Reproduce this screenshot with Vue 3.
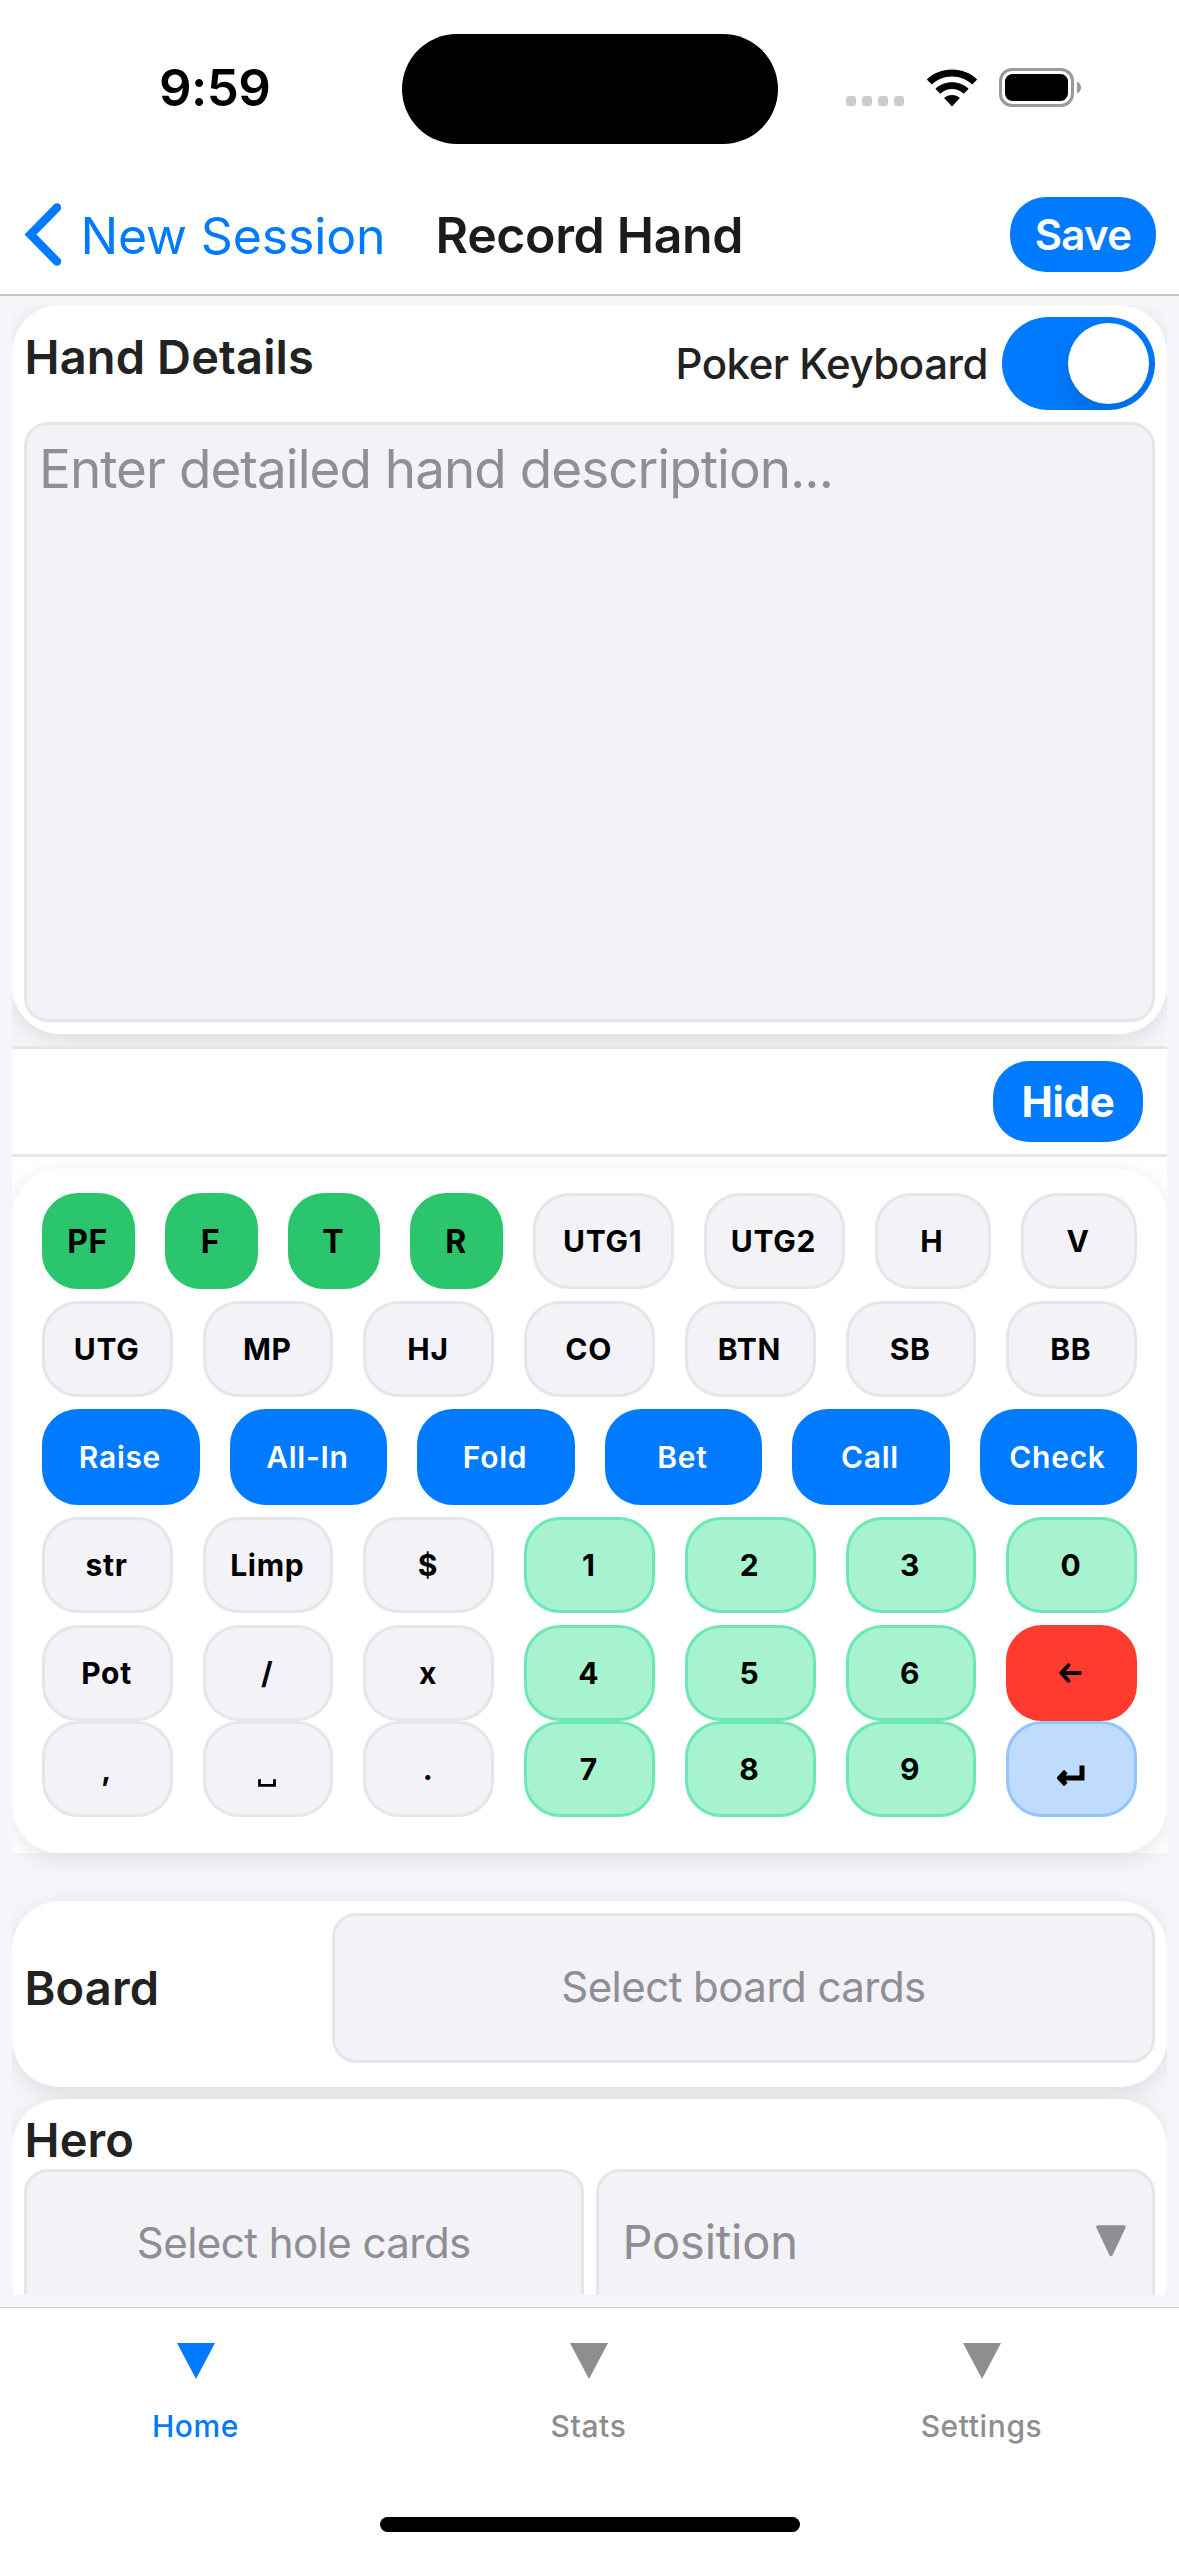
<script setup>
const k = (t, c = 'plain', w = 1) => ({ t, c, w })
const rows = [
  [k('PF', 'street', 86.8), k('F', 'street', 86.8), k('T', 'street', 86.8), k('R', 'street', 86.8), k('UTG1', 'plain', 134.7), k('UTG2', 'plain', 134.7), k('H', 'plain', 110.2), k('V', 'plain', 110.2)],
  ['UTG', 'MP', 'HJ', 'CO', 'BTN', 'SB', 'BB'].map((t) => k(t)),
  ['Raise', 'All-In', 'Fold', 'Bet', 'Call', 'Check'].map((t) => k(t, 'action')),
  [k('str'), k('Limp'), k('$'), k('1', 'num'), k('2', 'num'), k('3', 'num'), k('0', 'num')],
  [k('Pot'), k('/'), k('x'), k('4', 'num'), k('5', 'num'), k('6', 'num'), k('←', 'del')],
  [k(','), k('␣'), k('.'), k('7', 'num'), k('8', 'num'), k('9', 'num'), k('↵', 'enter')],
]
const tabs = ['Home', 'Stats', 'Settings']
</script>

<template>
  <div class="screen">
    <div class="status">
      <div class="time">9:59</div>
      <div class="island"></div>
      <div class="indicators">
        <div class="dots"><i v-for="n in 4" :key="n"></i></div>
        <svg class="wifi" width="52" height="38" viewBox="0 0 52 38">
          <path d="M26 0.5C36 0.5 45 4.300 51.200 10.500L46.200 15.500C41 10.400 34 7.400 26 7.400S11 10.400 5.800 15.500L0.800 10.500C7 4.300 16 0.500 26 0.500Z" />
          <path d="M26 13.200C32.500 13.200 38.300 15.600 42.600 19.800L37.700 24.700C34.600 21.800 30.600 20 26 20S17.400 21.800 14.300 24.700L9.400 19.800C13.700 15.600 19.500 13.200 26 13.200Z" />
          <path d="M26 25.900C29 25.900 31.800 27 33.900 28.900L26 37.400L18.100 28.900C20.200 27 23 25.900 26 25.900Z" />
        </svg>
        <svg class="battery" width="83" height="39" viewBox="0 0 83 39">
          <rect x="1.500" y="1.500" width="72" height="36" rx="11.500" fill="none" stroke="#999" stroke-width="3" />
          <rect x="6" y="6" width="63" height="27" rx="7.500" />
          <path d="M78 13.500C80.500 14.500 82 16.800 82 19.500S80.500 24.500 78 25.500Z" fill="#999" />
        </svg>
      </div>
    </div>

    <header class="nav">
      <a class="back">
        <svg width="37" height="63" viewBox="0 0 37 63"><path d="M33 4.500L6.500 31.500L33 58.500" fill="none" stroke="#007aff" stroke-width="8.500" stroke-linecap="round" stroke-linejoin="miter" /></svg>
        <span class="back-label">New Session</span>
      </a>
      <h1>Record Hand</h1>
      <button class="save">Save</button>
    </header>

    <main class="scroll">
      <section class="card details">
        <div class="details-head">
          <h2 class="t-details">Hand Details</h2>
          <label>Poker Keyboard<span class="switch"><i></i></span></label>
        </div>
        <div class="field area">Enter detailed hand description...</div>
      </section>

      <div class="pad">
        <div class="bar"><button class="hide">Hide</button></div>
        <section class="card keys">
          <div v-for="(row, r) in rows" :key="r" class="row">
            <button v-for="key in row" :key="key.t" class="key" :class="key.c" :style="{ flexGrow: key.w }">
              <svg v-if="key.c === 'del'" width="23" height="20" viewBox="0 0 23 20"><path d="M21 10H2.500M9.500 2.200L2.300 10L9.500 17.800" fill="none" stroke="#000" stroke-width="3.800" stroke-linecap="round" stroke-linejoin="round" /></svg>
              <svg v-else-if="key.c === 'enter'" class="ret" width="28" height="22" viewBox="0 0 28 22"><path d="M25 0.500V13H4M8.800 6.500L2.800 13L8.800 19.500" fill="none" stroke="#000" stroke-width="5" /></svg>
              <svg v-else-if="key.t === '␣'" class="space" width="18" height="9" viewBox="0 0 18 9"><path d="M1.500 0.300V6.300H16.500V0.300" fill="none" stroke="#000" stroke-width="2.800" /></svg>
              <span v-else>{{ key.t }}</span>
            </button>
          </div>
        </section>
      </div>

      <section class="card board">
        <h2 class="t-board">Board</h2>
        <div class="field pick board-pick">Select board cards</div>
      </section>

      <section class="card hero">
        <h2 class="t-hero">Hero</h2>
        <div class="hero-row">
          <div class="field pick">Select hole cards</div>
          <div class="field position">
            <span>Position</span>
            <svg width="30" height="32" viewBox="0 0 30 32"><path d="M2 2H28L15 29.500Z" fill="#8e8e93" stroke="#8e8e93" stroke-width="3.500" stroke-linejoin="round" /></svg>
          </div>
        </div>
      </section>
    </main>

    <nav class="tabs">
      <div v-for="(tab, i) in tabs" :key="tab" class="tab" :class="{ active: i === 0 }">
        <svg width="38" height="36" viewBox="0 0 38 36"><path d="M0 0H38L19 36Z" fill="currentColor" /></svg>
        <span>{{ tab }}</span>
      </div>
      <div class="home-indicator"></div>
    </nav>
  </div>
</template>

<style>
body { margin: 0; background: #fff; }
</style>

<style scoped>
* { box-sizing: border-box; }
.screen { width: 1179px; height: 2556px; display: flex; flex-direction: column; overflow: hidden; background: #fff; font-family: Inter, "Liberation Sans", sans-serif; color: #222; }
button { border: 0; font-family: inherit; padding: 0; }
h1, h2 { margin: 0; font-weight: 600; white-space: nowrap; }

.status { height: 177px; flex: none; display: grid; grid-template-columns: 402px 376px 1fr; }
.time { padding: 57px 0 0 159px; font-size: 51px; line-height: 62px; font-weight: 600; color: #000; letter-spacing: -0.600px; }
.island { margin-top: 34px; height: 110px; border-radius: 55px; background: #000; }
.indicators { display: flex; padding: 68px 0 0 68px; align-items: flex-start; }
.dots { display: flex; gap: 6px; margin-top: 28px; }
.dots i { width: 10px; height: 10px; border-radius: 3px; background: #ccc; }
.wifi { margin: 1px 0 0 22px; }
.battery { margin-left: 21px; }

.nav { height: 119px; flex: none; display: flex; align-items: center; padding: 0 23px 2px 24px; border-bottom: 2px solid #c6c6ca; }
.back { display: flex; align-items: center; color: #007aff; width: 411.500px; }
.back-label { font-size: 50px; margin: 2px 0 0 19.500px; white-space: nowrap; letter-spacing: -0.150px; }
h1 { font-size: 50px; color: #1c1c1e; letter-spacing: -0.350px; }
.save { margin-left: auto; width: 146px; height: 75px; border-radius: 36px; background: #007aff; color: #fff; font-size: 42px; font-weight: 600; letter-spacing: -0.700px; }

.scroll { height: 1990px; flex: none; margin: 9px 12px 0; overflow: hidden; box-shadow: 0 0 0 12px #f5f6fa; background: #f5f6fa; }
.nav { position: relative; background: #fff; }
.card { background: #fff; border-radius: 48px; box-shadow: 0 6px 24px rgba(0, 0, 0, 0.1); }
.details { height: 729px; padding: 12px; }
.details-head { height: 93px; margin-bottom: 12px; display: flex; justify-content: space-between; }
h2 { font-size: 47px; line-height: 58px; letter-spacing: 0.130px; }
.t-details { margin-top: 11px; }
.details label { display: flex; align-items: center; gap: 14px; font-size: 42px; font-weight: 500; letter-spacing: -0.470px; }
.switch { width: 153px; height: 93px; border-radius: 47px; background: #007aff; padding: 6px; display: flex; justify-content: flex-end; overflow: hidden; }
.switch i { width: 81px; height: 81px; border-radius: 50%; background: #fff; box-shadow: 0 9px 24px rgba(0, 0, 0, 0.15); }
.field { background: #f2f2f7; border: 3px solid #e5e5ea; border-radius: 24px; color: #8e8e93; white-space: nowrap; }
.area { height: 600px; padding: 12px; font-size: 53px; line-height: 64px; letter-spacing: -0.970px; }

.pad { margin-top: 12px; background: #fff; }
.bar { height: 111px; border: solid #e5e5ea; border-width: 3px 0; display: flex; justify-content: flex-end; align-items: center; padding-right: 24px; }
.hide { width: 150px; height: 81px; border-radius: 36px; background: #007aff; color: #fff; font-size: 42px; font-weight: 700; letter-spacing: -0.300px; }
.keys { margin-top: 12px; height: 684px; padding: 24px 30px 36px; display: flex; flex-direction: column; gap: 12px; }
.row { display: flex; gap: 30px; height: 96px; flex: none; }
.row:last-child { margin-top: -12px; }
.key { flex: 1 1 0; min-width: 0; height: 96px; border-radius: 36px; font-size: 30px; font-weight: 700; color: #000; display: flex; align-items: center; justify-content: center; background: #f2f2f7; border: 3px solid #e5e5ea; letter-spacing: 0.700px; }
.key > * { position: relative; left: -0.800px; }
.street { background: #2ac56c; border-color: #2ac56c; font-size: 32px; }
.action { background: #007aff; border-color: #007aff; color: #fff; font-weight: 600; }
.num { background: #a7f3d0; border-color: #6ee7b7; }
.del { background: #ff3b30; border-color: #ff3b30; }
.enter { background: #bfdbfe; border-color: #93c5fd; }
.ret { margin-top: 14px; }
.space { margin-top: 28px; }

.board { margin-top: 48px; height: 186px; padding: 12px 12px 24px; display: flex; align-items: center; }
.t-board { width: 308px; }
.pick { display: flex; align-items: center; justify-content: center; font-size: 42px; height: 150px; letter-spacing: -0.540px; padding-bottom: 3px; }
.board-pick { flex: 1; }
.hero { margin-top: 12px; height: 232px; padding: 12px; }
.t-board, .t-hero, .t-details { padding-left: 0.500px; }
.hero-row { display: grid; grid-template-columns: 1fr 1fr; gap: 12px; }
.position { height: 147px; display: flex; align-items: center; justify-content: space-between; padding: 0 26px 3px 24px; font-size: 47px; letter-spacing: -0.200px; }

.tabs { flex: 1; margin-top: 12px; position: relative; background: #fff; border-top: 1px solid #d5d5d8; display: grid; grid-template-columns: repeat(3, 1fr); align-items: start; }
.tab { padding: 35px 2px 0 0; display: flex; flex-direction: column; align-items: center; color: #8e8e8f; font-size: 30px; line-height: 36px; font-weight: 500; letter-spacing: 0.600px; gap: 28.500px; }
.active { color: #007aff; }
.home-indicator { position: absolute; left: 380px; top: 209px; width: 420px; height: 15px; border-radius: 8px; background: #000; }
</style>
